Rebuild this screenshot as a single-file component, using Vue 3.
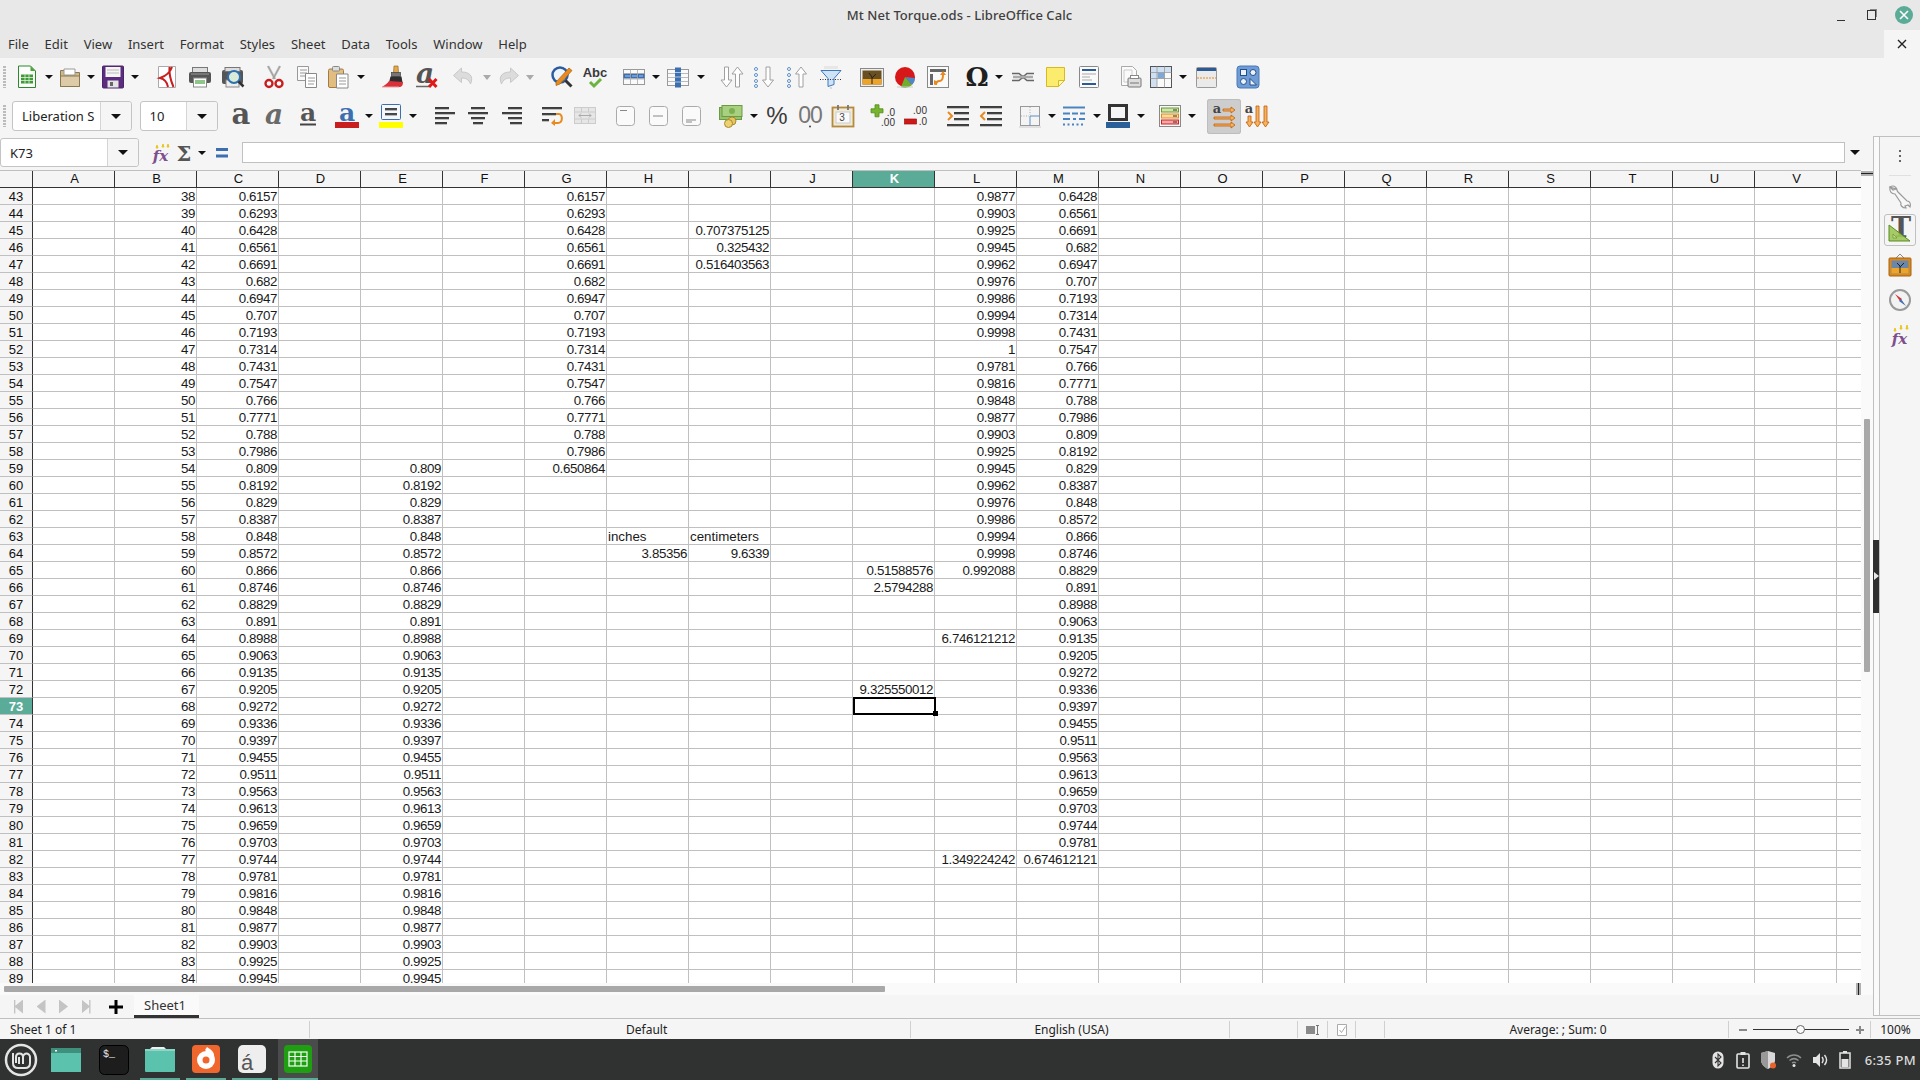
<template>
  <div class="app">
    <header class="titlebar">
      <span class="title">Mt Net Torque.ods - LibreOffice Calc</span>
      <div class="win-btns">
        <span class="win-min"></span>
        <span class="win-max"></span>
        <span class="win-close">
          <svg width="10" height="10" viewBox="0 0 10 10"><path d="M1 1l8 8M9 1l-8 8" stroke="#fff" stroke-width="1.6" /></svg>
        </span>
      </div>
    </header>

    <nav class="menubar">
      <span v-for="m in menus" :key="m" class="menu-item">{{ m }}</span>
      <span class="doc-close">
        <svg width="10" height="10" viewBox="0 0 10 10"><path d="M1 1l8 8M9 1l-8 8" stroke="#222" stroke-width="1.4" /></svg>
      </span>
    </nav>

    <div v-for="(row, r) in toolbars" :key="r" class="toolbar">
      <span class="grip"></span>
      <div
        v-for="it in row"
        :key="it.k + it.x"
        class="tb-item"
        :class="{ active: it.active }"
        :style="{ marginLeft: it.ml + 'px', width: it.w + 'px' }"
      >
        <span v-if="it.k === 'arrow'" class="tri"></span>
        <div v-else-if="it.combo" class="combo">
          <span class="combo-text">{{ it.combo }}</span>
          <span class="combo-btn"><span class="tri big"></span></span>
        </div>
        <span v-else class="ic" v-html="icons[it.k]"></span>
      </div>
    </div>

    <div class="workspace">
      <div class="left">
        <div class="formula">
          <div class="combo namebox">
            <span class="combo-text">K73</span>
            <span class="combo-btn"><span class="tri big"></span></span>
          </div>
          <div
            v-for="it in formulaIcons"
            :key="it.k + it.x"
            class="tb-item"
            :style="{ marginLeft: it.ml + 'px', width: it.w + 'px' }"
          >
            <span v-if="it.k === 'arrow'" class="tri"></span>
            <span v-else class="ic" v-html="icons[it.k]"></span>
          </div>
          <div class="formula-input"></div>
          <span class="formula-arrow"><span class="tri big"></span></span>
        </div>

        <div class="sheet-wrap">
          <div class="sheet-col">
            <div class="grid">
              <div class="row head">
                <div class="corner"></div>
                <div
                  v-for="c in columns"
                  :key="c"
                  class="col-h"
                  :class="{ sel: c === 'K' }"
                >{{ c }}</div>
              </div>
              <div v-for="row in rows" :key="row.n" class="row">
                <div class="row-h" :class="{ sel: row.n === 73 }">{{ row.n }}</div>
                <div
                  v-for="c in columns"
                  :key="c"
                  class="cell"
                  :class="{ txt: isText(row.vals[c]) }"
                >
                  {{ row.vals[c] }}
                  <span v-if="row.n === 73 && c === 'K'" class="cursor"><span class="handle"></span></span>
                </div>
              </div>
            </div>
            <div class="hscroll">
              <span class="hthumb"></span>
              <span class="split-box"></span>
            </div>
          </div>
          <div class="vscroll">
            <span class="vsplit"></span>
            <span class="vthumb"></span>
          </div>
        </div>

        <div class="tabbar">
          <span class="nav first"></span>
          <span class="nav prev"></span>
          <span class="nav next"></span>
          <span class="nav last"></span>
          <span class="add-tab">
            <svg width="14" height="14" viewBox="0 0 14 14"><path d="M7 0v14M0 7h14" stroke="#000" stroke-width="3" /></svg>
          </span>
          <span class="tab">Sheet1</span>
        </div>
      </div>

      <aside class="sidebar">
        <div class="side-handle"><span class="side-grip"><span class="grip-tri"></span></span></div>
        <div class="side-deck">
          <div class="side-dots"><i></i><i></i><i></i></div>
          <div class="side-sep"></div>
          <div v-for="s in sideIcons" :key="s" class="side-item" :class="{ on: s === 'sProps' }">
            <span class="ic" v-html="icons[s]"></span>
          </div>
        </div>
      </aside>
    </div>

    <footer class="status">
      <div class="st c1">Sheet 1 of 1</div>
      <div class="st c2">Default</div>
      <div class="st c3">English (USA)</div>
      <div class="st c4"></div>
      <div class="st c5">
        <svg width="14" height="12" viewBox="0 0 14 12"><rect x="0" y="2" width="9" height="8" fill="#8a8a8a" /><path d="M10 1.500h3M11.500 1.500v9M10 10.500h3" stroke="#777" fill="none" /></svg>
      </div>
      <div class="st c6">
        <svg width="12" height="14" viewBox="0 0 12 14"><path d="M1.500 1.500h9v11h-9z" fill="#fff" stroke="#aaa" /><path d="M3.500 7l2 2.500 4-6" fill="none" stroke="#aaa" /></svg>
      </div>
      <div class="st c7"></div>
      <div class="st c8">Average: ; Sum: 0</div>
      <div class="st c9">
        <span class="z-minus"></span>
        <span class="z-track"><span class="z-thumb"></span></span>
        <span class="z-plus"></span>
      </div>
      <div class="st c10">100%</div>
    </footer>

    <div class="taskbar">
      <span class="mint" v-html="icons.mint"></span>
      <span class="task plain first-task" v-html="icons.tWin"></span>
      <span class="task plain term" v-html="icons.tTerm"></span>
      <span class="task run folder-task" v-html="icons.tFolder"></span>
      <span class="task run" v-html="icons.tFire"></span>
      <span class="task run" v-html="icons.tFont"></span>
      <span class="task run cur" v-html="icons.tCalc"></span>
      <div class="tray">
        <span v-for="t in trayIcons" :key="t" class="tray-ic" v-html="icons[t]"></span>
        <span class="clock">6:35 PM</span>
      </div>
    </div>
  </div>
</template>

<script setup>
const menus = ['File', 'Edit', 'View', 'Insert', 'Format', 'Styles', 'Sheet', 'Data', 'Tools', 'Window', 'Help']
const columns = 'ABCDEFGHIJKLMNOPQRSTUVW'.split('')

const seq = [
  '0.6157', '0.6293', '0.6428', '0.6561', '0.6691', '0.682', '0.6947', '0.707', '0.7193', '0.7314',
  '0.7431', '0.7547', '0.766', '0.7771', '0.788', '0.7986', '0.809', '0.8192', '0.829', '0.8387',
  '0.848', '0.8572', '0.866', '0.8746', '0.8829', '0.891', '0.8988', '0.9063', '0.9135', '0.9205',
  '0.9272', '0.9336', '0.9397', '0.9455', '0.9511', '0.9563', '0.9613', '0.9659', '0.9703', '0.9744',
  '0.9781', '0.9816', '0.9848', '0.9877', '0.9903', '0.9925', '0.9945',
]
const colL = [
  '0.9877', '0.9903', '0.9925', '0.9945', '0.9962', '0.9976', '0.9986', '0.9994', '0.9998', '1',
  '0.9781', '0.9816', '0.9848', '0.9877', '0.9903', '0.9925', '0.9945', '0.9962', '0.9976', '0.9986',
  '0.9994', '0.9998', '0.992088',
]
const extra = {
  45: { I: '0.707375125' },
  46: { I: '0.325432' },
  47: { I: '0.516403563' },
  59: { G: '0.650864' },
  63: { H: 'inches', I: 'centimeters' },
  64: { H: '3.85356', I: '9.6339' },
  65: { K: '0.51588576' },
  66: { K: '2.5794288' },
  69: { L: '6.746121212' },
  72: { K: '9.325550012' },
  82: { L: '1.349224242', M: '0.674612121' },
}

const rows = seq.map((v, i) => {
  const n = 43 + i
  const vals = { B: String(38 + i), C: v }
  if (n <= 58) vals.G = v
  if (n >= 59) vals.E = v
  if (colL[i]) vals.L = colL[i]
  if (n <= 81) vals.M = seq[i + 2]
  return { n, vals: { ...vals, ...(extra[n] || {}) } }
})

const isText = (v) => v === 'inches' || v === 'centimeters'

// turn centre positions into flow margins
function layout(list, start) {
  let right = start
  return list.map((it) => {
    const w = it.w || (it.k === 'arrow' ? 10 : 32)
    const left = it.x - w / 2
    const ml = left - right
    right = left + w
    return { ...it, w, ml }
  })
}

const a = (x) => ({ k: 'arrow', x })
const row1 = [
  { k: 'new', x: 27 }, a(49), { k: 'open', x: 70 }, a(91), { k: 'save', x: 113 }, a(135),
  { k: 'pdf', x: 167 }, { k: 'print', x: 200 }, { k: 'preview', x: 233 }, { k: 'cut', x: 274 },
  { k: 'copy', x: 307 }, { k: 'paste', x: 339 }, a(361), { k: 'clone', x: 393 }, { k: 'clear', x: 427 },
  { k: 'undo', x: 464 }, { k: 'arrowOff', x: 487, w: 10 }, { k: 'redo', x: 508 }, { k: 'arrowOff', x: 530, w: 10 },
  { k: 'find', x: 562 }, { k: 'spell', x: 595 }, { k: 'tRow', x: 634 }, a(656), { k: 'tCol', x: 678 }, a(701),
  { k: 'sort', x: 732 }, { k: 'asc', x: 765 }, { k: 'desc', x: 798 }, { k: 'filter', x: 831 },
  { k: 'image', x: 872 }, { k: 'chart', x: 905 }, { k: 'pivot', x: 938 }, { k: 'omega', x: 977 }, a(999),
  { k: 'link', x: 1023 }, { k: 'note', x: 1056 }, { k: 'hdr', x: 1089 }, { k: 'parea', x: 1130 },
  { k: 'freeze', x: 1161 }, a(1183), { k: 'split', x: 1207 }, { k: 'draw', x: 1248 },
]
const row2 = [
  { k: 'font', combo: 'Liberation S', x: 72, w: 120 }, { k: 'size', combo: '10', x: 178.5, w: 78 },
  { k: 'bold', x: 241 }, { k: 'ital', x: 275 }, { k: 'under', x: 308 },
  { k: 'fcolor', x: 347 }, a(369), { k: 'bcolor', x: 391 }, a(413),
  { k: 'aLeft', x: 445 }, { k: 'aCenter', x: 478 }, { k: 'aRight', x: 512 }, { k: 'wrap', x: 552 }, { k: 'merge', x: 585 },
  { k: 'vTop', x: 626 }, { k: 'vMid', x: 659 }, { k: 'vBot', x: 692 }, { k: 'money', x: 731 }, a(754),
  { k: 'pct', x: 777 }, { k: 'num', x: 810 }, { k: 'date', x: 843 }, { k: 'addDec', x: 883 }, { k: 'delDec', x: 916 },
  { k: 'indent', x: 958 }, { k: 'outdent', x: 991 }, { k: 'borders', x: 1030 }, a(1052), { k: 'bstyle', x: 1074 }, a(1097),
  { k: 'bcol', x: 1118 }, a(1141), { k: 'cond', x: 1170 }, a(1192),
  { k: 'dirH', x: 1223.5, w: 34, active: true }, { k: 'dirV', x: 1257 },
]
const toolbars = [layout(row1, 6), layout(row2, 6)]
const formulaIcons = layout([{ k: 'fxSmall', x: 161, w: 24 }, { k: 'sigma', x: 184, w: 20 }, a(202), { k: 'eq', x: 222, w: 24 }], 139)

const sideIcons = ['sWrench', 'sProps', 'sGallery', 'sNav', 'fx']
const trayIcons = ['bt', 'clip', 'shield', 'wifi', 'vol', 'batt']

const s = (body) => `<svg width="24" height="24" viewBox="0 0 24 24" overflow="visible">${body}</svg>`
const lines = (ys, x1, x2) => ys.map((y) => `<path d="M${x1} ${y}H${x2}" stroke="#444" stroke-width="2"/><path d="M${x1} ${y + 1.4}H${x2}" stroke="#999" stroke-width=".8"/>`).join('')
const alignBars = (l) => l.map(([y, x1, x2]) => `<path d="M${x1} ${y}H${x2}" stroke="#3c3c3c" stroke-width="2"/><path d="M${x1} ${y + 1.4}H${x2}" stroke="#aaa" stroke-width=".8"/>`).join('')
const vbox = (line) => s(`<rect x="2.500" y="2.500" width="18" height="19" rx="3" fill="#fafafa" stroke="#aaa"/>${line}`)
const serif = 'font-family="DejaVu Serif,serif"'
const sans = 'font-family="Liberation Sans,sans-serif"'
const downArrow = (x) => `<path d="M${x - 2} 2v13h-3.500l5.500 7 5.500-7h-3.500V2z" fill="#fff" stroke="#a0a0a0"/>`
const upArrow = (x) => `<path d="M${x - 2} 22V9h-3.500L${x} 2l5.500 7h-3.500v13z" fill="#fff" stroke="#a0a0a0"/>`
const dots = [4, 10, 16, 21].map((y) => `<circle cx="3" cy="${y}" r="1.500" fill="#fff" stroke="#5b8fc4"/>`).join('')

const icons = {
  new: s(`<path d="M3.500 1h12l5 5v16.500h-17z" fill="#fdfdfd" stroke="#2a8a2a"/><path d="M15.500 1l5 5h-5z" fill="#4aa53a"/><rect x="6" y="9.500" width="12" height="9" fill="#3f9a3a"/><path d="M6 12.500h12M6 15.500h12M10 9.500v9M14 9.500v9" stroke="#dff3d8" stroke-width=".8"/>`),
  open: s(`<path d="M2.500 5.500h7l2 2h10v14h-19z" fill="#cdb98f" stroke="#8b7850"/><path d="M6 4h11v6H6z" fill="#fff" stroke="#999"/><path d="M2.500 11h19v10.500h-19z" fill="#dccba6" stroke="#8b7850"/>`),
  save: s(`<rect x="1.500" y="1" width="21" height="22" rx="1" fill="#5c2d7e" stroke="#4a2468"/><rect x="4.500" y="2" width="15" height="10" fill="#f5f5f5"/><path d="M6 5h12M6 8h12" stroke="#bbb"/><rect x="6.500" y="15.500" width="11" height="7" fill="#e4e4e4"/><rect x="9" y="17" width="3" height="4" fill="#666"/>`),
  pdf: s(`<path d="M3.500 1.500h17v21h-17z" fill="#fff" stroke="#aaa"/><path d="M17 2c-2 6-6 9-12 11 4 1 7 3 8 9M14.500 2c-.5 5 1 13 4 20" fill="none" stroke="#c81e1e" stroke-width="2"/>`),
  print: s(`<rect x="4.500" y="2.500" width="15" height="6" fill="#ddd" stroke="#777"/><rect x="1" y="7" width="22" height="11" rx="2" fill="#555"/><path d="M3 9h18" stroke="#999"/><rect x="5.500" y="13" width="13" height="9" fill="#fff" stroke="#888"/><path d="M7 15h10v4H7z" fill="#8fc48a"/>`),
  preview: s(`<rect x="1" y="5" width="21" height="14" rx="2" fill="#555"/><rect x="4" y="2.500" width="15" height="4" fill="#ddd" stroke="#777"/><rect x="5" y="15" width="13" height="7" fill="#eee" stroke="#888"/><circle cx="13" cy="12" r="6" fill="#d8ecd8" stroke="#2f6fb0" stroke-width="2"/><path d="M17.500 16.500l5 5" stroke="#333" stroke-width="2.500"/>`),
  cut: s(`<path d="M6 1l7 13M18 1l-7 13" stroke="#bdbdbd" stroke-width="2.500"/><path d="M6 1l7 13M18 1l-7 13" stroke="#888" stroke-width=".6"/><circle cx="7" cy="18.500" r="3.500" fill="#fff" stroke="#c81e1e" stroke-width="2.400"/><circle cx="17" cy="18.500" r="3.500" fill="#fff" stroke="#c81e1e" stroke-width="2.400"/>`),
  copy: s(`<path d="M2.500 1.500h11v14h-11z" fill="#fafafa" stroke="#999"/><path d="M5 5h7M5 8h7M5 11h6" stroke="#999"/><path d="M10.500 8.500h11v14h-11z" fill="#fff" stroke="#888"/><path d="M13 13h7M13 16h7M13 19h6" stroke="#999"/>`),
  paste: s(`<rect x="1.500" y="4" width="15" height="18.500" rx="1.500" fill="#e2bd82" stroke="#a07c40"/><rect x="5.500" y="1.500" width="7" height="4.500" rx="1" fill="#ddd" stroke="#888"/><path d="M9.500 9h11.500v14h-11.500z" fill="#fff" stroke="#888"/><path d="M12 13h7M12 16h7M12 19h7" stroke="#999"/>`),
  clone: s(`<path d="M13 1h4l.5 7h-5z" fill="#e0aa50" stroke="#9a6c20" stroke-width=".7"/><rect x="10.500" y="7.500" width="9" height="4" fill="#777" stroke="#444" stroke-width=".7"/><path d="M9.500 11.500h11l1 6H8z" fill="#2e2e2e"/><path d="M8 16c-1 2-4 4-7 6h17c3 0 4-2 4-5z" fill="#d8313a"/><path d="M1 22h17" stroke="#f0a0a0"/>`),
  clear: s(`<text x="10" y="18" text-anchor="middle" font-size="28" font-style="italic" font-weight="700" fill="#555" ${serif}>a</text><path d="M1 21.500h13" stroke="#666" stroke-width="1.500"/><path d="M14 14l7.500 8M21.500 14l-7.500 8" stroke="#e01818" stroke-width="3"/>`),
  undo: s(`<path d="M9.500 3L1.500 10.500l8 7V13c4 0 7 1 9 6 3.500-8-1-12-9-12z" fill="#dcdcdc" stroke="#c8c8c8"/>`),
  redo: s(`<path d="M14.500 3l8 7.500-8 7V13c-4 0-7 1-9 6-3.500-8 1-12 9-12z" fill="#dcdcdc" stroke="#c8c8c8"/>`),
  arrowOff: s(`<path d="M8 10h8l-4 5z" fill="#aaa"/>`),
  find: s(`<circle cx="10" cy="10" r="7.500" fill="#eef4fb" stroke="#2b5d9e" stroke-width="2.500"/><path d="M15.500 15.500l6 6" stroke="#333" stroke-width="3"/><path d="M6 17L19 3l3 2.500L10 19l-4 1.500z" fill="#e88a20" stroke="#a8620f" stroke-width=".7"/>`),
  spell: s(`<text x="12" y="12" text-anchor="middle" font-size="13" font-weight="700" fill="#3a3a3a" ${sans}>Abc</text><path d="M7 17l4 4 7-7" fill="none" stroke="#6db33f" stroke-width="3"/>`),
  tRow: s(`<rect x="1.500" y="4.500" width="21" height="15" fill="#fafafa" stroke="#999"/><rect x="1.500" y="8.500" width="21" height="5" fill="#3c6fb0"/><path d="M1.500 8.500h21M1.500 14h21M8.500 4.500v15M15.500 4.500v15" stroke="#aaa" stroke-width=".8"/><path d="M3 11h18" stroke="#a9c6e8" stroke-dasharray="5 2"/>`),
  tCol: s(`<rect x="1.500" y="4.500" width="21" height="16" fill="#fafafa" stroke="#999"/><path d="M1.500 8.500h21M1.500 12.500h21M1.500 16.500h21" stroke="#aaa" stroke-width=".8"/><rect x="9" y="2.500" width="6" height="20" fill="#3c6fb0"/><path d="M9 7.500h6M9 12h6M9 17h6" stroke="#a9c6e8"/>`),
  sort: s(downArrow(6.5) + upArrow(17.5)),
  asc: s(dots + downArrow(15)),
  desc: s(dots + upArrow(15)),
  filter: s(`<path d="M5 1h14v3H5z" fill="#ddd" opacity=".6"/><path d="M2 5.500h20l-7 8v6l-6 2v-8z" fill="#cfe3f7" stroke="#3c78bd"/><path d="M1 14.500h22" stroke="#333" stroke-dasharray="1 1.500"/><path d="M12 22v2" stroke="#bbb"/>`),
  image: s(`<rect x="0.500" y="3.500" width="23" height="18" fill="#eee" stroke="#888"/><rect x="2.500" y="5.500" width="19" height="14" fill="#6a5020"/><path d="M2.500 14h19v5.500h-19z" fill="#eca52a"/><path d="M12 19v-7l-3-4M12 13l4-4" stroke="#222" fill="none"/>`),
  chart: s(`<circle cx="12" cy="12" r="10" fill="#d81818"/><path d="M12 12l10 1a10 10 0 0 1-3 7z" fill="#4d87c6"/><path d="M12 12l7 8a10 10 0 0 1-11 2z" fill="#6fae2e"/><path d="M4 22h16" stroke="#ccc"/>`),
  pivot: s(`<rect x="1.500" y="1.500" width="21" height="21" fill="#fafafa" stroke="#888"/><rect x="4" y="4" width="16" height="3" fill="#666"/><rect x="4" y="9" width="3" height="11" fill="#666"/><path d="M10 20c0-3 1-4 3.500-4s3.500-2 3.500-6" fill="none" stroke="#e88a20" stroke-width="2"/><path d="M14 10l3-4 3 4zM12 17l-4 3 0-5z" fill="#e88a20"/>`),
  omega: s(`<text x="12" y="21" text-anchor="middle" font-size="26" font-weight="700" fill="#1f1f1f" ${serif}>Ω</text>`),
  link: s(`<path d="M1 8.500h7l3 2.500h2l3-2.500h7M1 15.500h7l3-2.500h2l3 2.500h7" fill="none" stroke="#666" stroke-width="1.600"/><path d="M2 12h20" stroke="#aaa" stroke-width="2.500"/>`),
  note: s(`<path d="M2.500 2.500h18v13l-6 6h-12z" fill="#fbec6e" stroke="#d9b920"/><path d="M20.500 15.500h-6v6z" fill="#fff8c0" stroke="#d9b920"/>`),
  hdr: s(`<rect x="2.500" y="1.500" width="19" height="21" rx="1" fill="#fafafa" stroke="#888"/><rect x="5" y="4" width="14" height="2" fill="#2c5a94"/><path d="M5 9h14M5 12h8M5 15h10" stroke="#aaa"/><rect x="5" y="18" width="14" height="2" fill="#2c5a94"/>`),
  parea: s(`<path d="M3.500 1.500h11l4 4v15h-15z" fill="#fafafa" stroke="#aaa"/><path d="M6 5h8v12H6z" fill="none" stroke="#ccc"/><rect x="10" y="13" width="13" height="9" rx="1" fill="#ddd" stroke="#777"/><rect x="12.500" y="10.500" width="8" height="3" fill="#fff" stroke="#888"/><path d="M12 18h9" stroke="#777"/>`),
  freeze: s(`<rect x="1.500" y="1.500" width="21" height="21" fill="#fafafa" stroke="#555"/><rect x="2" y="2" width="20" height="5" fill="#cfe0f2"/><rect x="2" y="2" width="6" height="20" fill="#cfe0f2"/><rect x="8.500" y="7.500" width="7" height="6" fill="#7ea8d6"/><path d="M1.500 7.500h21M1.500 13.500h21M8 1.500v21M15.500 1.500v21" stroke="#999" stroke-width=".8"/>`),
  split: s(`<rect x="1.500" y="2.500" width="20" height="20" rx="1" fill="#eaeaea" stroke="#999"/><rect x="2" y="3" width="19" height="3" fill="#2c5a94"/><path d="M2 13h19" stroke="#e88a20" stroke-dasharray="2 1"/>`),
  draw: s(`<rect x="1" y="1" width="22" height="22" rx="3" fill="#6f9cd6" stroke="#4a78b5"/><rect x="4.500" y="4.500" width="6" height="6" fill="#eaf2fb" stroke="#234f88"/><circle cx="17" cy="7.500" r="3" fill="#eaf2fb" stroke="#234f88"/><circle cx="7.500" cy="16.500" r="3" fill="#eaf2fb" stroke="#234f88"/><path d="M14 13.500v6.500h6.500z" fill="#eaf2fb" stroke="#234f88"/>`),
  bold: s(`<text x="12" y="20" text-anchor="middle" font-size="29" font-weight="700" fill="#555" ${serif}>a</text>`),
  ital: s(`<text x="11" y="20" text-anchor="middle" font-size="28" font-weight="700" font-style="italic" fill="#6a6a6a" ${serif}>a</text>`),
  under: s(`<text x="12" y="17" text-anchor="middle" font-size="25" font-weight="700" fill="#555" ${serif}>a</text><path d="M4 20.500h16" stroke="#444" stroke-width="2"/>`),
  fcolor: s(`<text x="12" y="16.500" text-anchor="middle" font-size="25" font-weight="700" fill="#3c6fb0" ${serif}>a</text><rect x="0" y="18" width="24" height="6" fill="#c81e1e"/>`),
  bcolor: s(`<rect x="2.500" y="0.500" width="19" height="15" rx="1" fill="#f4f7fb" stroke="#3c6fb0"/>${lines([5, 10], 6, 18)}<rect x="0" y="18" width="24" height="6" fill="#ffff00"/>`),
  aLeft: s(alignBars([[4, 2, 16], [9, 2, 22], [14, 2, 16], [19, 2, 14]])),
  aCenter: s(alignBars([[4, 5, 19], [9, 2, 22], [14, 5, 19], [19, 7, 17]])),
  aRight: s(alignBars([[4, 8, 22], [9, 2, 22], [14, 8, 22], [19, 10, 22]])),
  wrap: s(alignBars([[4, 2, 22], [10, 2, 16], [16, 2, 9]]) + `<path d="M16 10h3c4 0 4 9-1 9h-4" fill="none" stroke="#e88a20" stroke-width="2"/><path d="M15 15l-4 4 4 3z" fill="#e88a20"/>`),
  merge: s(`<rect x="1.500" y="3.500" width="21" height="16" fill="#e6e6e6" stroke="#ccc"/><path d="M1.500 8h21M1.500 15h21M8.500 3.500v4.500M15.500 3.500v4.500M8.500 15v4.500M15.500 15v4.500" stroke="#ccc"/><path d="M6 11.500h12M6 11.500l2-2M6 11.500l2 2M18 11.500l-2-2M18 11.500l-2 2" stroke="#aaa" fill="none"/>`),
  vTop: vbox(`<path d="M6 6.500h7" stroke="#888"/>`),
  vMid: vbox(`<path d="M6 12h10" stroke="#888"/>`),
  vBot: vbox(`<path d="M6 16h10M6 18h6" stroke="#888"/>`),
  money: s(`<rect x="0.500" y="3.500" width="22" height="12" fill="#93c36a" stroke="#6a9a44"/><rect x="3" y="1.500" width="20" height="11" fill="#a8d080" stroke="#6a9a44"/><circle cx="13" cy="7" r="3" fill="#7cb050"/><circle cx="13" cy="17" r="4" fill="#e7c660" stroke="#a88a30"/><circle cx="9.500" cy="19.500" r="4" fill="#edd070" stroke="#a88a30"/>`),
  pct: s(`<text x="12" y="20" text-anchor="middle" font-size="24" fill="#3c3c3c" ${sans}>%</text>`),
  num: s(`<text x="12" y="19" text-anchor="middle" font-size="23" fill="#777" ${sans} letter-spacing="-1">00</text><circle cx="12" cy="22.500" r="1" fill="#444"/>`),
  date: s(`<rect x="1.500" y="3.500" width="21" height="19" fill="#f0ead8" stroke="#b58a3c" stroke-width="1.800"/><path d="M7 1v5M17 1v5" stroke="#777" stroke-width="1.800"/><rect x="5" y="8" width="14" height="11" fill="#fafafa" stroke="#ccc"/><text x="11" y="17" text-anchor="middle" font-size="10" fill="#444" ${sans}>3</text>`),
  addDec: s(`<path d="M5 1h5v5h5v5h-5v5H5v-5H0V6h5z" fill="#77b52e" stroke="#4f8a16" transform="scale(.8)"/><text x="20" y="12" text-anchor="middle" font-size="10" fill="#333" ${sans}>.0</text><text x="17" y="22" text-anchor="middle" font-size="10" fill="#333" ${sans}>.00</text>`),
  delDec: s(`<rect x="0.500" y="15" width="12" height="5" fill="#d01818" stroke="#a01010" stroke-width=".7"/><text x="16" y="10" text-anchor="middle" font-size="10" fill="#333" ${sans}>.00</text><text x="19" y="21" text-anchor="middle" font-size="10" fill="#333" ${sans}>.0</text>`),
  indent: s(alignBars([[3, 1, 23], [9, 8, 23], [15, 8, 23], [21, 1, 23]]) + `<path d="M2 8l4 4-4 4" fill="none" stroke="#e88a20" stroke-width="2"/>`),
  outdent: s(alignBars([[3, 1, 23], [9, 8, 23], [15, 8, 23], [21, 1, 23]]) + `<path d="M6 8l-4 4 4 4" fill="none" stroke="#e88a20" stroke-width="2"/>`),
  borders: s(`<rect x="2.500" y="2.500" width="19" height="19" fill="#f4f4f4" stroke="#999"/><path d="M12 3v8M3 12h8" stroke="#aaa" stroke-dasharray="1 1.500"/><path d="M12 12h9.500M12 12v9.500" stroke="#5b8fc4"/><path d="M1 23h22" stroke="#ccc"/>`),
  bstyle: s(`<path d="M1 3.500h22" stroke="#4a84c0" stroke-width="2"/><path d="M1 9.500h7M10 9.500h6M18 9.500h5" stroke="#4a84c0" stroke-width="2"/><path d="M1 15h7M11 15h3M17 15h6" stroke="#4a84c0" stroke-width="2"/><path d="M1 20.500h22" stroke="#4a84c0" stroke-width="2" stroke-dasharray="2 2.500"/>`),
  bcol: s(`<rect x="2" y="0" width="20" height="17" fill="#333"/><rect x="5" y="3" width="14" height="11" fill="#f5f5f5"/><rect x="0" y="18" width="24" height="6" fill="#2b5f98"/>`),
  cond: s(`<rect x="1.500" y="1.500" width="21" height="21" fill="#fafafa" stroke="#888"/><rect x="3.500" y="4" width="17" height="4" fill="#cfe6b0" stroke="#6a9a2a"/><rect x="3.500" y="10" width="17" height="4" fill="#fbd9a0" stroke="#e08a20"/><rect x="3.500" y="16" width="17" height="4" fill="#f7a8a8" stroke="#d02020"/><path d="M15 6h4M15 12h4M15 18h4" stroke="#333"/>`),
  dirH: s(`<text x="5" y="9" text-anchor="middle" font-size="13" font-weight="700" fill="#444" ${serif}>a</text><path d="M11 5h8v-2l4 3-4 3v-2h-8z" fill="#f5b060" stroke="#c25d00" stroke-width=".8"/><path d="M2 13h17v-2l4 3-4 3v-2H2z" fill="#f5b060" stroke="#c25d00" stroke-width=".8"/><path d="M2 20h17v-2l4 3-4 3v-2H2z" fill="#f5b060" stroke="#c25d00" stroke-width=".8"/>`),
  dirV: s(`<text x="4" y="9" text-anchor="middle" font-size="13" font-weight="700" fill="#444" ${serif}>a</text><path d="M3 12h3v6h2l-3.500 5L1 18h2z" fill="#f5b060" stroke="#c25d00" stroke-width=".8"/><path d="M11 2h3v16h2l-3.500 5L9 18h2z" fill="#f5b060" stroke="#c25d00" stroke-width=".8"/><path d="M19 2h3v16h2l-3.500 5L17 18h2z" fill="#f5b060" stroke="#c25d00" stroke-width=".8"/>`),
  fxSmall: s(`<text x="11.500" y="20" text-anchor="middle" font-size="15" font-weight="700" font-style="italic" fill="#7d4f8e" ${serif}>fx</text><path d="M7 7l1-3 1 3zM13 6l1-3 1 3zM18 6l1-3 1 3z" fill="#e8c820" stroke="#e8c820"/>`),
  fx: s(`<text x="11.500" y="21" text-anchor="middle" font-size="15" font-weight="700" font-style="italic" fill="#7d4f8e" ${serif}>fx</text><path d="M6 8l1-3 1 3zM12 6l1-4 1 4zM18 6l1-4 1 4z" fill="#e8c820" stroke="#e8c820"/>`),
  sigma: s(`<text x="12" y="20" text-anchor="middle" font-size="21" font-weight="700" fill="#555" ${serif}>Σ</text>`),
  eq: s(`<path d="M1 7.500h12M1 14h12" transform="translate(5 1)" stroke="#3c6fb0" stroke-width="3"/>`),
  sWrench: s(`<path d="M2 3c3-2 6-1 7 3 0 1 0 1 1 2l9 9c3 0 4 3 3 6l-2-2-3 1 1 2c-4 0-6-3-5-5L7 10C4 10 1 8 2 3l3 3 3-1z" fill="#f7f7f7" stroke="#999" stroke-width="1.200"/>`),
  sProps: s(`<text x="13" y="19" text-anchor="middle" font-size="27" font-weight="700" fill="#555" ${serif}>T</text><path d="M1 7v16h21z" fill="#9cc557" fill-opacity=".9" stroke="#5a8a20"/><path d="M5 16v4h4z" fill="#c4e096" stroke="#5a8a20" stroke-width=".6"/>`),
  sGallery: s(`<path d="M8 5l4-4 4 4" fill="none" stroke="#888"/><rect x="1" y="5" width="22" height="18" rx="1" fill="#d88a20" stroke="#a8620f"/><rect x="3.500" y="7.500" width="17" height="13" fill="#6a86a8"/><path d="M3.500 15h17v5.500h-17z" fill="#eca52a"/><path d="M12 20v-7l-3-3M12 14l4-4" stroke="#222" fill="none"/>`),
  sNav: s(`<circle cx="12" cy="12" r="10" fill="#f2f2f2" stroke="#999" stroke-width="2"/><path d="M7 6l7 5-2 2z" fill="#d83030"/><path d="M18 18l-7-5 2-2z" fill="#3c6fb0"/>`),
  mint: `<svg width="34" height="34" viewBox="0 0 34 34"><circle cx="17" cy="17" r="15" fill="none" stroke="#e4e4e4" stroke-width="2.500"/><path d="M9 10v10c0 3 2 5 5 5h7c3 0 5-2 5-5v-6c0-2-2-3.500-3.500-3.500s-3.500 1.500-3.500 3.500c0-2-1.500-3.500-3.500-3.500s-3.500 1.500-3.500 3.500v6M15 14v7M19 14v7" fill="none" stroke="#e4e4e4" stroke-width="2"/></svg>`,
  tWin: `<svg width="30" height="24" viewBox="0 0 30 24"><rect x="0" y="0" width="30" height="24" fill="#5ac2ad"/><rect x="0" y="0" width="30" height="5" fill="#3f8f7d"/><rect x="4" y="2" width="2" height="1.500" fill="#fff"/></svg>`,
  tTerm: `<svg width="30" height="30" viewBox="0 0 30 30"><rect x="0.500" y="0.500" width="29" height="29" rx="5" fill="#1d1d1d" stroke="#000"/><text x="4" y="12" font-size="10" fill="#eee" font-family="Liberation Mono,monospace">$_</text></svg>`,
  tFolder: `<svg width="30" height="26" viewBox="0 0 30 26"><path d="M5 3l2-2h12l2 2z" fill="#eee"/><rect x="0" y="3" width="30" height="23" rx="1" fill="#5ac2ad"/><rect x="0" y="3" width="30" height="2" fill="#8dd6c6"/></svg>`,
  tFire: `<svg width="28" height="28" viewBox="0 0 28 28"><rect x="0" y="0" width="28" height="28" rx="4" fill="#f0672e"/><circle cx="14" cy="15" r="9" fill="#fff"/><circle cx="14" cy="15" r="3.500" fill="#f0672e"/><path d="M15 2c5 3 8 6 7 11l-6-1c1-3-1-5-3-7z" fill="#fff"/></svg>`,
  tFont: `<svg width="28" height="28" viewBox="0 0 28 28"><rect x="0" y="0" width="28" height="28" rx="5" fill="#eee"/><text x="9" y="25" text-anchor="middle" font-size="22" fill="#555" font-family="Liberation Sans,sans-serif">á</text></svg>`,
  tCalc: `<svg width="28" height="28" viewBox="0 0 28 28"><rect x="0" y="0" width="28" height="28" rx="4" fill="#1f9e12"/><rect x="5" y="7" width="18" height="14" fill="none" stroke="#f0fff0" stroke-width="1.200"/><path d="M5 11.500h18M5 16h18M11 7v14M17 7v14" stroke="#f0fff0" stroke-width="1.200"/></svg>`,
  bt: `<svg width="12" height="18" viewBox="0 0 12 18"><rect x="0.500" y="0.500" width="11" height="17" rx="5.500" fill="#e4e4e4"/><path d="M3 6l6 6-3 3V3l3 3-6 6" fill="none" stroke="#333" stroke-width="1.100"/></svg>`,
  clip: `<svg width="14" height="18" viewBox="0 0 14 18"><rect x="1" y="3" width="12" height="14" rx="1" fill="none" stroke="#e4e4e4" stroke-width="1.600"/><rect x="4.500" y="1" width="5" height="3" fill="#e4e4e4"/><path d="M7 7v5M7 13.500v1.500" stroke="#e4e4e4" stroke-width="1.600"/></svg>`,
  shield: `<svg width="18" height="20" viewBox="0 0 18 20"><path d="M8 1l7 2v7c0 4-3 7-7 9-4-2-7-5-7-9V3z" fill="#d8d8d8"/><path d="M8 1v18c-4-2-7-5-7-9V3z" fill="#999"/><circle cx="13" cy="15.500" r="3" fill="#e8632c"/></svg>`,
  wifi: `<svg width="16" height="14" viewBox="0 0 16 14"><path d="M1 5c4-4 10-4 14 0M3.500 7.500c3-2.500 6-2.500 9 0M6 10c1.500-1 2.500-1 4 0" fill="none" stroke="#8d8d8d" stroke-width="1.500"/><circle cx="8" cy="12.500" r="1.500" fill="#e4e4e4"/></svg>`,
  vol: `<svg width="16" height="16" viewBox="0 0 16 16"><path d="M1 5h3l4-4v14l-4-4H1z" fill="#e4e4e4"/><path d="M10 5c1.500 2 1.500 4 0 6M12.500 3c2.500 3 2.500 7 0 10" fill="none" stroke="#e4e4e4" stroke-width="1.400"/></svg>`,
  batt: `<svg width="12" height="18" viewBox="0 0 12 18"><rect x="4" y="0" width="4" height="2" fill="#e4e4e4"/><rect x="1" y="2" width="10" height="15" fill="none" stroke="#e4e4e4" stroke-width="1.500"/><rect x="2.500" y="8" width="7" height="8" fill="#e4e4e4"/></svg>`,
}
</script>

<style>
html, body {
  margin: 0;
  background: #303231;
}
</style>

<style scoped>
.app {
  width: 1920px;
  height: 1080px;
  overflow: hidden;
  display: flex;
  flex-direction: column;
  background: #f5f5f5;
  font-family: "Noto Sans", sans-serif;
  font-size: 13px;
  color: #2e2e2e;
}
.titlebar {
  height: 30px;
  background: #e8e8e8;
  display: flex;
  align-items: center;
  justify-content: center;
  position: relative;
}
.title {
  color: #3f3f3f;
  font-weight: 500;
  font-size: 13px;
  letter-spacing: .06px;
  margin-left: -1px;
}
.win-btns {
  position: absolute;
  right: 7px;
  top: 6px;
  display: flex;
  align-items: center;
}
.win-min {
  width: 8px;
  height: 1px;
  background: #333;
  margin: 11px 22px 0 0;
}
.win-max {
  width: 7px;
  height: 8px;
  border: 1px solid #333;
  margin-right: 19px;
  box-shadow: 2px -2px 0 -1px #888;
}
.win-close {
  width: 18px;
  height: 18px;
  border-radius: 50%;
  background: #5aab98;
  display: flex;
  align-items: center;
  justify-content: center;
}
.menubar {
  height: 28px;
  background: #e8e8e8;
  display: flex;
  align-items: center;
  padding-left: 8px;
  position: relative;
}
.menu-item {
  margin-right: 15.800px;
  font-size: 13px;
  color: #333;
}
.doc-close {
  position: absolute;
  right: 0;
  top: 0;
  width: 36px;
  height: 28px;
  background: #f5f5f5;
  display: flex;
  align-items: center;
  justify-content: center;
}
.toolbar {
  height: 38px;
  box-sizing: border-box;
  display: flex;
  align-items: center;
  flex-shrink: 0;
}
.toolbar + .toolbar {
  padding-top: 2px;
}
.grip {
  width: 3px;
  height: 22px;
  margin-left: 3px;
  background: repeating-linear-gradient(#bbb 0 2px, transparent 2px 3px);
}
.tb-item {
  flex-shrink: 0;
  display: flex;
  align-items: center;
  justify-content: center;
  height: 24px;
}
.tb-item.active {
  height: 35px;
  background: #cdcdcd;
  border-radius: 3px;
  box-shadow: inset 0 0 0 1px #bdbdbd;
}
.ic {
  display: flex;
  line-height: 0;
}
.tri {
  width: 0;
  height: 0;
  border-left: 4px solid transparent;
  border-right: 4px solid transparent;
  border-top: 4px solid #111;
}
.tri.big {
  border-left-width: 5px;
  border-right-width: 5px;
  border-top-width: 5px;
}
.combo {
  width: 100%;
  height: 30px;
  display: flex;
  background: #fff;
  border: 1px solid #c4c4c4;
  border-radius: 3px;
  box-sizing: border-box;
  flex-shrink: 0;
}
.combo-text {
  flex: 1;
  min-width: 0;
  padding-left: 9px;
  line-height: 28px;
  font-size: 13px;
  white-space: nowrap;
  overflow: hidden;
  color: #222;
}
.combo-btn {
  width: 30px;
  flex-shrink: 0;
  border-left: 1px solid #d4d4d4;
  background: #f5f5f5;
  border-radius: 0 3px 3px 0;
  display: flex;
  align-items: center;
  justify-content: center;
}
.workspace {
  display: flex;
  height: 884px;
  flex-shrink: 0;
}
.left {
  width: 1873px;
  display: flex;
  flex-direction: column;
}
.formula {
  height: 36px;
  box-sizing: border-box;
  padding-top: 1px;
  display: flex;
  align-items: center;
  flex-shrink: 0;
}
.namebox {
  width: 139px;
  height: 29px;
}
.namebox .combo-btn {
  width: 30px;
}
.formula-input {
  flex: 1;
  height: 21px;
  margin-left: 8px;
  background: #fff;
  border: 1px solid #c0c0c0;
  box-sizing: border-box;
}
.formula-arrow {
  width: 28px;
  display: flex;
  justify-content: flex-start;
  padding-left: 5px;
  box-sizing: border-box;
}
.sheet-wrap {
  display: flex;
  height: 825px;
  flex-shrink: 0;
}
.sheet-col {
  width: 1861px;
  display: flex;
  flex-direction: column;
}
.grid {
  height: 813px;
  overflow: hidden;
  background: #fff;
  font-family: "Liberation Sans", sans-serif;
  font-size: 13.33px;
  color: #1a1a1a;
}
.row {
  display: flex;
  height: 17px;
}
.row.head {
  height: 18px;
  background: #f5f5f5;
  border-top: 1px solid #c0c0c0;
  border-bottom: 1px solid #333;
  box-sizing: border-box;
}
.corner {
  width: 33px;
  flex-shrink: 0;
  border-right: 1px solid #333;
  box-sizing: border-box;
}
.col-h {
  width: 82px;
  flex-shrink: 0;
  box-sizing: border-box;
  border-right: 1px solid #333;
  padding-left: 2px;
  text-align: center;
  line-height: 16px;
  font-size: 13px;
  color: #111;
}
.col-h.sel,
.row-h.sel {
  background: #5aab98;
  color: #fff;
  font-weight: 700;
}
.row-h {
  width: 33px;
  flex-shrink: 0;
  box-sizing: border-box;
  background: #f5f5f5;
  border-right: 1px solid #333;
  border-bottom: 1px solid #c0c0c0;
  text-align: center;
  line-height: 17px;
  font-size: 13px;
  color: #111;
}
.cell {
  width: 82px;
  flex-shrink: 0;
  box-sizing: border-box;
  border-right: 1px solid #c0c0c0;
  border-bottom: 1px solid #c0c0c0;
  text-align: right;
  padding-right: 1px;
  line-height: 17px;
  letter-spacing: -.4px;
  white-space: nowrap;
  position: relative;
}
.cell.txt {
  text-align: left;
  padding-left: 1px;
  letter-spacing: 0;
}
.cursor {
  position: absolute;
  left: 0;
  top: -1px;
  width: 83px;
  height: 18px;
  box-sizing: border-box;
  border: 2px solid #000;
  z-index: 2;
}
.handle {
  position: absolute;
  left: 78px;
  top: 12px;
  width: 5px;
  height: 5px;
  background: #000;
}
.hscroll {
  height: 12px;
  background: #fafafa;
  display: flex;
  align-items: center;
  padding-left: 4px;
}
.hthumb {
  width: 881px;
  height: 6px;
  background: #a8a8a8;
  border-radius: 1px;
}
.split-box {
  margin-left: auto;
  width: 5px;
  height: 12px;
  background: linear-gradient(90deg, #b0b0b0 0 2px, #222 2px 3px, #b0b0b0 3px);
}
.vscroll {
  width: 12px;
  background: #fafafa;
  position: relative;
  display: flex;
  flex-direction: column;
  align-items: center;
}
.vsplit {
  align-self: stretch;
  height: 5px;
  background: linear-gradient(#b0b0b0 0 2px, #222 2px 3px, #b0b0b0 3px);
  margin-top: 1px;
}
.vthumb {
  width: 6px;
  height: 253px;
  background: #a8a8a8;
  border-radius: 1px;
  margin-top: 243px;
}
.tabbar {
  height: 23px;
  display: flex;
  align-items: center;
  flex-shrink: 0;
  background: #f5f5f5;
  position: relative;
  padding-left: 14px;
}
.nav {
  width: 9px;
  height: 14px;
  margin-right: 13.500px;
  background: #c4c4c4;
}
.nav.first,
.nav.prev {
  clip-path: polygon(100% 0, 100% 100%, 0 50%);
}
.nav.next,
.nav.last {
  clip-path: polygon(0 0, 0 100%, 100% 50%);
}
.nav.first {
  clip-path: polygon(0 0, 15% 0, 15% 45%, 100% 0, 100% 100%, 15% 55%, 15% 100%, 0 100%);
}
.nav.last {
  clip-path: polygon(0 0, 85% 45%, 85% 0, 100% 0, 100% 100%, 85% 100%, 85% 55%, 0 100%);
}
.add-tab {
  display: flex;
  margin-left: 5px;
  margin-right: 11px;
}
.tab {
  width: 65px;
  height: 23px;
  box-sizing: border-box;
  background: #fafafa;
  border-bottom: 3px solid #333;
  padding-right: 3px;
  text-align: center;
  line-height: 20px;
  font-size: 13px;
  color: #333;
}
.sidebar {
  width: 47px;
  margin-top: 2px;
  display: flex;
  height: 880px;
  border-top: 1px solid #c0c0c0;
  box-sizing: border-box;
}
.side-handle {
  width: 6px;
  box-sizing: border-box;
  background: #fafafa;
  border-left: 1px solid #c0c0c0;
  border-bottom: 1px solid #c0c0c0;
  display: flex;
  align-items: center;
}
.side-grip {
  width: 7px;
  height: 73px;
  background: #2f2f2f;
  display: flex;
  align-items: center;
  flex-shrink: 0;
  margin-left: -1px;
}
.grip-tri {
  border-left: 5px solid #e8e8e8;
  border-top: 4px solid transparent;
  border-bottom: 4px solid transparent;
  margin-left: 1px;
}
.side-deck {
  flex: 1;
  border-left: 1px solid #c0c0c0;
  border-bottom: 1px solid #c0c0c0;
  display: flex;
  flex-direction: column;
  align-items: center;
}
.side-dots {
  height: 38px;
  display: flex;
  flex-direction: column;
  align-items: center;
  justify-content: center;
  gap: 3px;
  flex-shrink: 0;
}
.side-dots i {
  width: 2px;
  height: 2px;
  background: #666;
}
.side-sep {
  width: 22px;
  height: 1px;
  background: #e0e0e0;
  margin-bottom: 2px;
  flex-shrink: 0;
}
.side-item {
  width: 32px;
  height: 35px;
  box-sizing: border-box;
  display: flex;
  align-items: center;
  justify-content: center;
  flex-shrink: 0;
}
.side-item.on {
  height: 32px;
  margin: 1px 0 1px;
  border: 1px solid #c0c0c0;
  border-radius: 3px;
}
.status {
  height: 21px;
  border-top: 1px solid #c0c0c0;
  box-sizing: border-box;
  display: flex;
  flex-shrink: 0;
  font-size: 12px;
  background: #f5f5f5;
  color: #222;
}
.st {
  height: 17px;
  margin-top: 2px;
  line-height: 17px;
  box-sizing: border-box;
  border-right: 1px solid #d0d0d0;
  display: flex;
  align-items: center;
  justify-content: center;
  flex-shrink: 0;
  white-space: nowrap;
}
.c1 { width: 310px; justify-content: flex-start; padding-left: 10px; }
.c2 { width: 600px; justify-content: flex-start; padding-left: 316px; border-right-color: transparent; }
.c3 { width: 320px; border-left: 1px solid #d0d0d0; padding-left: 3px; }
.c4 { width: 68px; }
.c5 { width: 30px; }
.c6 { width: 28px; }
.c7 { width: 29px; }
.c8 { width: 344px; padding-left: 3px; }
.c9 { width: 142px; justify-content: flex-start; position: relative; padding-left: 10px; }
.c10 { width: 49px; border-right: 0; }
.z-minus {
  width: 8px;
  height: 2px;
  background: #888;
  flex-shrink: 0;
}
.z-track {
  width: 96px;
  height: 1px;
  background: #333;
  margin: 0 7px 0 6px;
  flex-shrink: 0;
  position: relative;
}
.z-thumb {
  position: absolute;
  left: 43px;
  top: -4px;
  width: 7px;
  height: 7px;
  border: 1px solid #666;
  border-radius: 50%;
  background: #fafafa;
}
.z-plus {
  width: 8px;
  height: 8px;
  flex-shrink: 0;
  background: linear-gradient(#888, #888) center / 8px 2px no-repeat, linear-gradient(#888, #888) center / 2px 8px no-repeat;
}
.taskbar {
  height: 41px;
  background: #303231;
  display: flex;
  align-items: center;
  flex-shrink: 0;
}
.mint {
  display: flex;
  margin-left: 4px;
}
.task {
  width: 40px;
  height: 41px;
  box-sizing: border-box;
  display: flex;
  align-items: center;
  justify-content: center;
  flex-shrink: 0;
}
.task.plain.first-task {
  margin-left: 8px;
}
.task.plain.term {
  margin-left: 8px;
}
.task.folder-task {
  margin-left: 6px;
}
.task.run {
  border-bottom: 2px solid #5aab98;
  margin-right: 6px;
}
.task.cur {
  background: #4a4c4b;
}
.tray {
  margin-left: auto;
  display: flex;
  align-items: center;
  color: #e0e0e0;
}
.tray-ic {
  display: flex;
  width: 25.500px;
  justify-content: center;
}
.clock {
  margin: 0 4px 0 7px;
  font-size: 13px;
  font-weight: 500;
  letter-spacing: .3px;
  color: #dcdcdc;
}
</style>
